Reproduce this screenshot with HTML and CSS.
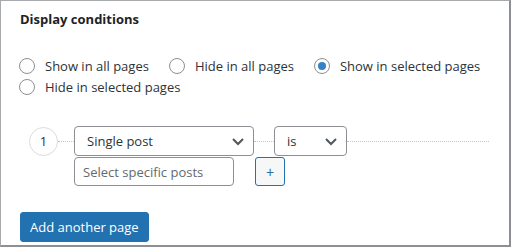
FILE: index.html
```html
<!doctype html>
<html lang="en-us">
  <head>
    <meta charset="utf-8">
    <title>Display conditions</title>
    <link rel="stylesheet" href="styles.css">
  </head>
  <body>
    <div class="panel">
      <h2 class="panel-title">Display conditions</h2>

      <div class="radios">
        <label class="radio"><input type="radio" name="mode"> Show in all pages</label>
        <label class="radio"><input type="radio" name="mode"> Hide in all pages</label>
        <label class="radio"><input type="radio" name="mode" checked> Show in selected pages</label>
        <label class="radio"><input type="radio" name="mode"> Hide in selected pages</label>
      </div>

      <div class="rule">
        <div class="rule-top">
          <span class="rule-num">1</span>
          <span class="dots dots-short"></span>
          <div class="select select-type">
            <span>Single post</span>
            <svg width="14" height="14" viewBox="0 0 14 14"><path d="M2 5l5 5 5-5" fill="none" stroke="#50575e" stroke-width="2"/></svg>
          </div>
          <span class="dots dots-mid"></span>
          <div class="select select-op">
            <span>is</span>
            <svg width="14" height="14" viewBox="0 0 14 14"><path d="M2 5l5 5 5-5" fill="none" stroke="#50575e" stroke-width="2"/></svg>
          </div>
          <span class="dots dots-fill"></span>
        </div>
        <div class="rule-bottom">
          <input class="posts-input" type="text" placeholder="Select specific posts">
          <button class="btn-plus">+</button>
        </div>
      </div>

      <button class="btn-primary">Add another page</button>
    </div>
  </body>
</html>
```

FILE: styles.css
```css
body {
  margin: 0;
  font-family: "Open Sans", "Noto Sans", sans-serif;
  color: #2c3338;
  background: #fff;
}

.panel {
  width: 511px;
  height: 247px;
  box-sizing: border-box;
  border: 1px solid #a7aaad;
  border-right: 2px solid #8c8f94;
  border-bottom: 2px solid #8c8f94;
  padding: 8px 20px 0 18px;
}

.panel-title {
  margin: 0 0 0 1px;
  font-size: 13px;
  font-weight: 700;
  line-height: 20px;
  color: #1d2327;
}

.radios {
  display: flex;
  flex-wrap: wrap;
  column-gap: 20px;
  margin-top: 26px;
  font-size: 13px;
}

.radio {
  display: flex;
  align-items: center;
  gap: 10px;
  height: 21px;
}

.radio input {
  appearance: none;
  width: 16px;
  height: 16px;
  margin: 0;
  border: 1px solid #8c8f94;
  border-radius: 50%;
  display: flex;
  align-items: center;
  justify-content: center;
}

.radio input:checked::before {
  content: "";
  width: 8px;
  height: 8px;
  border-radius: 50%;
  background: #3582c4;
}

.rule {
  margin-top: 29px;
  margin-left: 10px;
}

.rule-top {
  display: flex;
  align-items: center;
}

.rule-num {
  width: 27px;
  height: 27px;
  border: 1px solid #dcdcde;
  border-radius: 50%;
  display: flex;
  align-items: center;
  justify-content: center;
  font-size: 13px;
}

.dots {
  border-top: 1px dotted #c3c4c7;
  height: 0;
}

.dots-short { width: 16px; }
.dots-mid { width: 20px; }
.dots-fill { flex: 1; }

.select {
  height: 28px;
  border: 1px solid #8c8f94;
  border-radius: 4px;
  box-sizing: content-box;
  display: flex;
  align-items: center;
  justify-content: space-between;
  padding: 0 8px 0 12px;
  font-size: 13px;
  color: #2c3338;
}

.select-type { width: 158px; }
.select-op { width: 51px; }

.rule-bottom {
  display: flex;
  gap: 21px;
  margin-top: 1px;
  margin-left: 45px;
}

.posts-input {
  width: 160px;
  height: 29px;
  box-sizing: border-box;
  border: 1px solid #8c8f94;
  border-radius: 4px;
  padding: 0 8px;
  font-family: inherit;
  font-size: 13px;
}

.posts-input::placeholder {
  color: #646970;
}

.btn-plus {
  width: 30px;
  height: 29px;
  border: 1px solid #2271b1;
  border-radius: 3px;
  background: #f6f7f7;
  color: #2271b1;
  font-size: 14px;
  padding: 0;
}

.btn-primary {
  margin-top: 26px;
  margin-left: 1px;
  height: 30px;
  padding: 0 9px;
  background: #2271b1;
  border: 1px solid #2271b1;
  border-radius: 3px;
  color: #fff;
  font-family: inherit;
  font-size: 13px;
}
```
